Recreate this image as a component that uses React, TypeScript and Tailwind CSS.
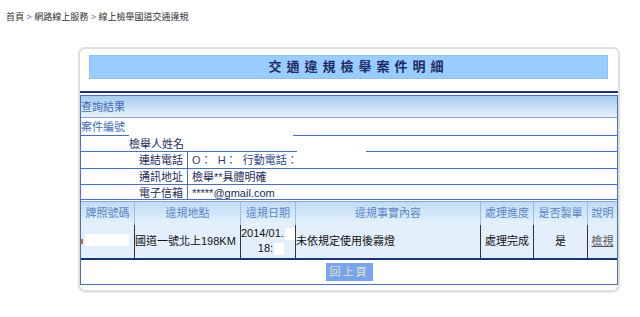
import React from 'react';

const font = "font-['Liberation_Sans','Noto_Sans_CJK_TC',sans-serif]";

const columns = [
  { label: '牌照號碼', w: 'w-[54px]' },
  { label: '違規地點', w: 'w-[106px]' },
  { label: '違規日期', w: 'w-[55px]' },
  { label: '違規事實內容', w: 'w-[185px]' },
  { label: '處理進度', w: 'w-[53px]' },
  { label: '是否製單', w: 'w-[54px]' },
];

const InfoRow: React.FC<{ label: string; h: string; children: React.ReactNode }> = ({ label, h, children }) => (
  <div className={`flex ${h} border-b border-[#4a6fbf]`}>
    <div className="w-[107px] border-r border-[#4a6fbf] pr-[4px] text-right text-[#1d2c5a]">{label}</div>
    <div className="pl-[4px]">{children}</div>
  </div>
);

export default function App() {
  return (
    <div className={`w-[640px] h-[317px] bg-white ${font} text-[11px] leading-[16px]`}>
      {/* breadcrumb */}
      <div className="h-[47px] pl-[6px] pt-[12px] text-[9px] leading-[10px] text-[#333]">
        首頁 <span className="text-[#6a7fa8]">&gt;</span> 網路線上服務 <span className="text-[#6a7fa8]">&gt;</span> 線上檢舉國道交通違規
      </div>

      <div className="ml-[78px] w-[542px] h-[245px] rounded-[7px] border-2 border-[#dedede] shadow-[0_1px_1px_rgba(0,0,0,0.08)]">
        <div className="ml-[9px] mt-[6px] w-[519px] h-[24px] border border-[#8fbef4] bg-[#99ccff] pl-[20px] text-center text-[13px] leading-[22px] font-bold tracking-[5px] text-[#1d2a63]">
          交通違規檢舉案件明細
        </div>

        <div className="mt-[12px] h-[2px] bg-[#1b3479]" />

        <div className="mt-[2px] w-[538px] border border-[#4a6fbf]">
          {/* 查詢結果 */}
          <div className="h-[22px] border-b border-[#8aa6d6] bg-gradient-to-b from-[#a6cbef] to-[#eaf3fb] leading-[22px] text-[#3f6cb5]">
            查詢結果
          </div>

          {/* 案件編號 */}
          <div className="flex h-[18px]">
            <div className="w-[48px] border-b border-[#4a6fbf] leading-[18px] text-[#3f6cb5]">案件編號</div>
            <div className="w-[164px]" />
            <div className="flex-1 border-b border-[#4a6fbf]" />
          </div>

          {/* 檢舉人姓名 */}
          <div className="flex h-[16px]">
            <div className="w-[216px] border-b border-[#4a6fbf]">
              <div className="w-[107px] pr-[4px] text-right text-[#1d2c5a]">檢舉人姓名</div>
            </div>
            <div className="w-[69px]" />
            <div className="flex-1 border-b border-[#4a6fbf]" />
          </div>

          <InfoRow label="連結電話" h="h-[17px]">
            <span className="whitespace-pre text-[#2a3f85]">{'O：  H：  行動電話：'}</span>
          </InfoRow>
          <InfoRow label="通訊地址" h="h-[16px]">
            <span className="text-[#1d2c5a]">檢舉**具體明確</span>
          </InfoRow>
          <InfoRow label="電子信箱" h="h-[15px]">
            <span className="text-[#1d2c5a]">*****@gmail.com</span>
          </InfoRow>

          {/* column headers */}
          <div className="mt-px flex h-[24px] border-t border-[#8aa6d6] bg-gradient-to-b from-[#c0dcf5] to-[#e6f2fc] text-[#5a85c5]">
            {columns.map((c) => (
              <div key={c.label} className={`${c.w} border-r border-[#9dbde3] text-center leading-[23px]`}>
                {c.label}
              </div>
            ))}
            <div className="flex-1 text-center leading-[23px]">說明</div>
          </div>

          {/* data row */}
          <div className="flex h-[33px] bg-[#e3f0fb] text-[#111]">
            <div className="relative w-[54px] border-r border-[#333]">
              <div className="absolute left-0 top-[14px] h-[5px] w-[2px] bg-[#c8732a]" />
              <div className="absolute left-[4px] top-[9px] h-[12px] w-[44px] bg-white" />
            </div>
            <div className="w-[106px] border-r border-[#333] leading-[33px]">國道一號北上198KM</div>
            <div className="w-[55px] border-r border-[#333] pt-px text-center leading-[15px]">
              <div className="flex justify-end">
                <span>2014/01.</span>
                <span className="ml-[1px] mt-[2px] h-[12px] w-[11px] bg-white" />
              </div>
              <div className="flex justify-center pl-[6px]">
                <span>18:</span>
                <span className="ml-[1px] mt-[2px] h-[12px] w-[10px] bg-white" />
              </div>
            </div>
            <div className="w-[185px] border-r border-[#333] leading-[33px]">未依規定使用後霧燈</div>
            <div className="w-[53px] border-r border-[#333] text-center leading-[33px]">處理完成</div>
            <div className="w-[54px] border-r border-[#333] text-center leading-[33px]">是</div>
            <div className="flex-1 text-center leading-[33px]">
              <span className="text-[#555] underline">檢視</span>
            </div>
          </div>

          <div className="h-[2px] bg-[#1b3479]" />

          {/* back button */}
          <div className="flex h-[24px] justify-center pt-[3px]">
            <button className="h-[18px] w-[47px] bg-[#78a3ee] text-[11px] leading-[18px] tracking-[2px] text-[#e4e4c4]">
              回上頁
            </button>
          </div>
        </div>
      </div>
    </div>
  );
}
